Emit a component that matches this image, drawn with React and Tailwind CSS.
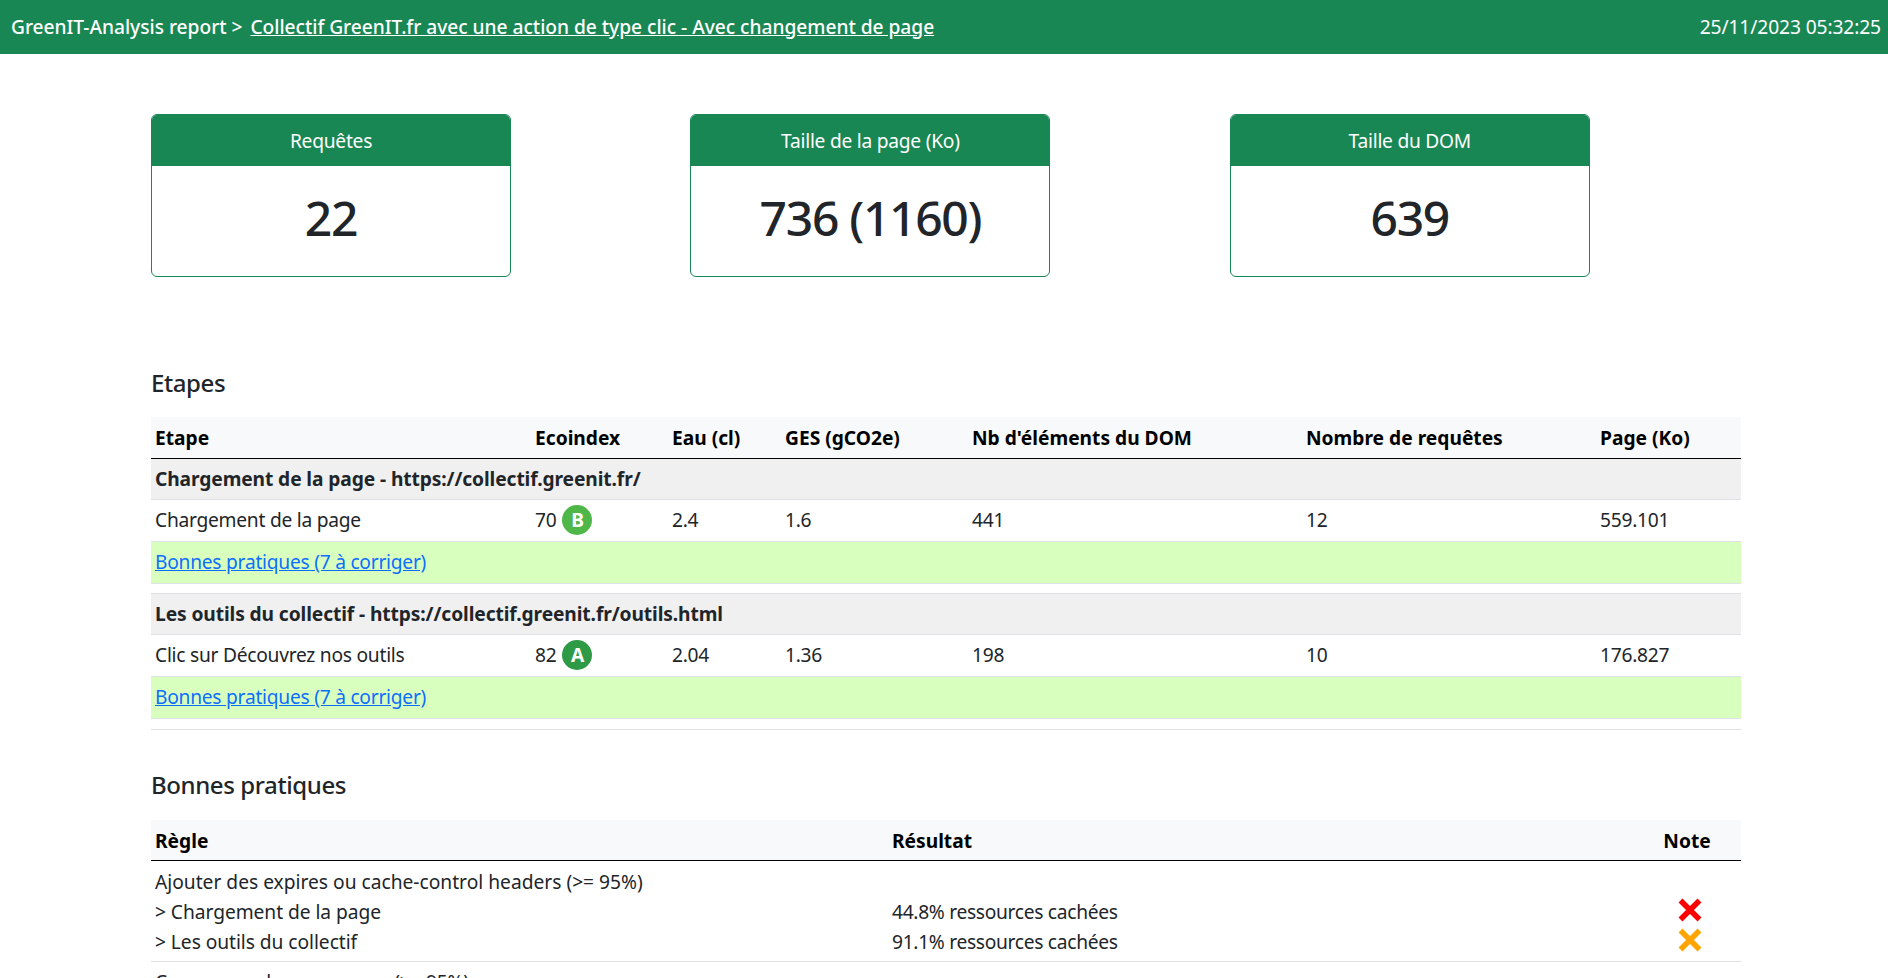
const steps = [
  {
    group: "Chargement de la page - https://collectif.greenit.fr/",
    name: "Chargement de la page",
    ecoindex: 70,
    grade: "B",
    gradeClass: "bg-[#4fb648]",
    water: "2.4",
    ges: "1.6",
    dom: "441",
    requests: "12",
    page: "559.101",
  },
  {
    group: "Les outils du collectif - https://collectif.greenit.fr/outils.html",
    name: "Clic sur Découvrez nos outils",
    ecoindex: 82,
    grade: "A",
    gradeClass: "bg-[#2e9a46]",
    water: "2.04",
    ges: "1.36",
    dom: "198",
    requests: "10",
    page: "176.827",
  },
];

function Card({ title, value }) {
  return (
    <div className="w-[360px] border border-[#198754] rounded-md overflow-hidden">
      <div className="h-[51px] bg-[#198754] text-white text-center leading-[52px]">{title}</div>
      <div className="h-[110px] flex items-center justify-center pb-[7px] text-[48px] font-medium tracking-[-1.3px] text-[#212529]">{value}</div>
    </div>
  );
}

function Cross({ className }) {
  return (
    <svg width="24" height="24" viewBox="0 0 24 24" className={className}>
      <path d="M2.5 2.5 L21.5 21.5 M21.5 2.5 L2.5 21.5" stroke="currentColor" strokeWidth="5.5" fill="none" />
    </svg>
  );
}

function HeadCell({ children, className = "" }) {
  return <th className={`h-[41px] px-[4px] pt-[3px] text-left font-bold text-black tracking-normal border-b border-black ${className}`}>{children}</th>;
}

function StepRows({ step }) {
  return (
    <>
      <tr className="bg-[#f0f0f0] border-b border-[#dee2e6]">
        <td colSpan={7} className="h-[41px] px-[4px] pt-[1px] font-bold tracking-[-0.1px]">{step.group}</td>
      </tr>
      <tr className="border-b border-[#dee2e6]">
        <td className="h-[42px] px-[4px] pt-[1px]">{step.name}</td>
        <td className="px-[4px]">
          <div className="flex items-center gap-[6px]">
            {step.ecoindex}
            <span className={`w-[30px] h-[30px] rounded-full text-white font-bold flex items-center justify-center ${step.gradeClass}`}>{step.grade}</span>
          </div>
        </td>
        <td className="px-[4px] pt-[1px]">{step.water}</td>
        <td className="px-[4px] pt-[1px]">{step.ges}</td>
        <td className="px-[4px] pt-[1px]">{step.dom}</td>
        <td className="px-[4px] pt-[1px]">{step.requests}</td>
        <td className="px-[4px] pt-[1px]">{step.page}</td>
      </tr>
      <tr className="bg-[#d9ffbe] border-b border-[#dee2e6]">
        <td colSpan={7} className="h-[42px] px-[4px] pt-[1px]">
          <a href="#" className="text-[#0d6efd] underline">Bonnes pratiques (7 à corriger)</a>
        </td>
      </tr>
    </>
  );
}

export default function App() {
  return (
    <div className="h-screen overflow-hidden bg-white text-[#212529] text-[19.2px] tracking-[-0.25px] font-['Noto_Sans',sans-serif]">
      <header className="h-[54px] bg-[#198754] text-white flex items-center justify-between pl-[11px] pr-[7px] font-medium tracking-[-0.03px]">
        <div>
          GreenIT-Analysis report &gt; <a href="#" className="ml-[3px] underline">Collectif GreenIT.fr avec une action de type clic - Avec changement de page</a>
        </div>
        <div className="font-normal tracking-[-0.1px]">25/11/2023 05:32:25</div>
      </header>

      <main className="pl-[151px] pr-[147px]">
        <section className="flex gap-[179.4px] pt-[60px]">
          <Card title="Requêtes" value="22" />
          <Card title="Taille de la page (Ko)" value="736 (1160)" />
          <Card title="Taille du DOM" value="639" />
        </section>

        <h2 className="mt-[91px] text-[24px] leading-[29px] font-medium tracking-[-0.4px]">Etapes</h2>
        <table className="mt-[20px] w-full table-fixed border-collapse">
          <colgroup>
            <col className="w-[380px]" />
            <col className="w-[137px]" />
            <col className="w-[113px]" />
            <col className="w-[187px]" />
            <col className="w-[334px]" />
            <col className="w-[294px]" />
            <col />
          </colgroup>
          <thead>
            <tr className="bg-[#f8f9fa]">
              <HeadCell>Etape</HeadCell>
              <HeadCell>Ecoindex</HeadCell>
              <HeadCell>Eau (cl)</HeadCell>
              <HeadCell>GES (gCO2e)</HeadCell>
              <HeadCell>Nb d'éléments du DOM</HeadCell>
              <HeadCell>Nombre de requêtes</HeadCell>
              <HeadCell>Page (Ko)</HeadCell>
            </tr>
          </thead>
          <tbody>
            <StepRows step={steps[0]} />
            <tr className="border-b border-[#dee2e6]"><td colSpan={7} className="h-[10px]"></td></tr>
            <StepRows step={steps[1]} />
            <tr className="border-b border-[#dee2e6]"><td colSpan={7} className="h-[11px]"></td></tr>
          </tbody>
        </table>

        <h2 className="mt-[40px] text-[24px] leading-[29px] font-medium tracking-[-0.4px]">Bonnes pratiques</h2>
        <table className="mt-[21px] w-full table-fixed border-collapse">
          <colgroup>
            <col className="w-[737px]" />
            <col />
            <col className="w-[108px]" />
          </colgroup>
          <thead>
            <tr className="bg-[#f8f9fa]">
              <HeadCell>Règle</HeadCell>
              <HeadCell>Résultat</HeadCell>
              <HeadCell className="!text-center">Note</HeadCell>
            </tr>
          </thead>
          <tbody>
            <tr className="border-b border-[#dee2e6]">
              <td className="px-[4px] pt-[6px] pb-[4px] align-top leading-[30px] tracking-[-0.05px]">
                <div className="h-[30px] tracking-normal">Ajouter des expires ou cache-control headers (&gt;= 95%)</div>
                <div className="h-[30px]">&gt; Chargement de la page</div>
                <div className="h-[30px]">&gt; Les outils du collectif</div>
              </td>
              <td className="px-[4px] pt-[6px] pb-[4px] align-top leading-[30px] tracking-[-0.3px]">
                <div className="h-[30px]"></div>
                <div className="h-[30px]">44.8% ressources cachées</div>
                <div className="h-[30px]">91.1% ressources cachées</div>
              </td>
              <td className="px-[4px] pt-[4px] align-top">
                <div className="h-[30px]"></div>
                <div className="h-[30px] flex justify-center items-center pl-[6px] text-[#ff0000]"><Cross /></div>
                <div className="h-[30px] flex justify-center items-center pl-[6px] text-[#ffa500]"><Cross /></div>
              </td>
            </tr>
            <tr>
              <td className="px-[4px] pt-[6px] whitespace-nowrap">Compresser les ressources (&gt;= 95%)</td>
              <td></td>
              <td></td>
            </tr>
          </tbody>
        </table>
      </main>
    </div>
  );
}
